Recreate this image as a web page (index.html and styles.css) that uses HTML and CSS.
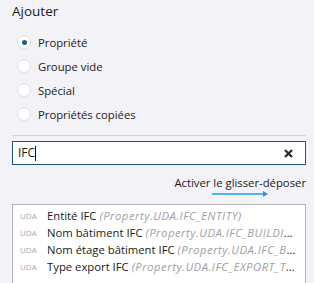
FILE: index.html
```html
<!DOCTYPE html>
<html lang="fr">
<head>
    <meta charset="UTF-8">
    <meta name="viewport" content="width=device-width, initial-scale=1.0">
    <title>Ajouter</title>
    <link rel="stylesheet" href="styles.css">
</head>
<body>
    <div class="panel">
        <h2 class="panel-title">Ajouter</h2>

        <div class="radio-list">
            <label class="radio-row"><span class="radio checked"></span>Propriété</label>
            <label class="radio-row"><span class="radio"></span>Groupe vide</label>
            <label class="radio-row"><span class="radio"></span>Spécial</label>
            <label class="radio-row"><span class="radio"></span>Propriétés copiées</label>
        </div>

        <div class="separator"></div>

        <div class="search-box">
            <span class="search-text">IFC</span><span class="caret"></span>
            <svg class="clear-icon" width="9" height="9" viewBox="0 0 9 9">
                <path d="M1 1 L8 8 M8 1 L1 8" stroke="#2b2b2b" stroke-width="2.3" stroke-linecap="butt"/>
            </svg>
        </div>

        <div class="dnd-row">
            <div class="dnd-toggle">
                <span>Activer le glisser-déposer</span>
                <svg class="dnd-arrow" width="56" height="6" viewBox="0 0 56 6">
                    <path d="M0 3 H52" stroke="#4fb4e3" stroke-width="2"/>
                    <path d="M51 0 L56 3 L51 6 Z" fill="#2f95d0"/>
                </svg>
            </div>
        </div>

        <div class="results">
            <div class="result-row"><span class="tag">UDA</span><span class="name">Entité IFC <em>(Property.UDA.IFC_ENTITY)</em></span></div>
            <div class="result-row"><span class="tag">UDA</span><span class="name">Nom bâtiment IFC <em>(Property.UDA.IFC_BUILDING_NAME)</em></span></div>
            <div class="result-row"><span class="tag">UDA</span><span class="name">Nom étage bâtiment IFC <em>(Property.UDA.IFC_BUILDING_STOREY_NAME)</em></span></div>
            <div class="result-row"><span class="tag">UDA</span><span class="name">Type export IFC <em>(Property.UDA.IFC_EXPORT_TYPE)</em></span></div>
        </div>
    </div>
</body>
</html>
```

FILE: styles.css
```css
body {
    margin: 0;
    height: 283px;
    background-color: #f3f2f7;
    font-family: 'Open Sans', 'Noto Sans', sans-serif;
    font-size: 11.3px;
    color: #1a1a1a;
    overflow: hidden;
}

.panel {
    padding: 0 8px 0 12px;
}

.panel-title {
    margin: 0;
    padding-top: 2px;
    font-size: 13.5px;
    font-weight: normal;
    line-height: 18px;
}

.radio-list {
    padding-top: 10px;
}

.radio-row {
    display: flex;
    align-items: center;
    height: 24px;
    padding-left: 5px;
}

.radio {
    width: 12px;
    height: 12px;
    border: 1px solid #dcdce2;
    border-radius: 50%;
    background: #ffffff;
    margin-right: 7px;
    display: flex;
    align-items: center;
    justify-content: center;
}

.radio.checked::after {
    content: "";
    width: 5px;
    height: 5px;
    border-radius: 50%;
    background: #1c5c96;
}

.separator {
    height: 1px;
    background: #d2d2d8;
    margin-top: 9px;
}

.search-box {
    margin-top: 5px;
    height: 22px;
    border: 1px solid #1f5382;
    background: #ffffff;
    display: flex;
    align-items: center;
    padding-left: 5px;
    padding-right: 12px;
    font-size: 12px;
}

.search-text {
    line-height: 16px;
}

.caret {
    width: 1px;
    height: 15px;
    background: #111111;
}

.clear-icon {
    margin-left: auto;
}

.dnd-row {
    display: flex;
    justify-content: flex-end;
    padding-top: 10px;
}

.dnd-toggle {
    display: flex;
    flex-direction: column;
    align-items: center;
}

.dnd-arrow {
    display: block;
    margin-top: 1px;
}

.results {
    margin-top: 7px;
    border: 1px solid #b4b4b8;
    background: #ffffff;
    padding: 2px 8px 20px 7px;
}

.result-row {
    display: flex;
    align-items: center;
    height: 17px;
    white-space: nowrap;
}

.tag {
    font-size: 8px;
    color: #a8a8a8;
    width: 27px;
    flex-shrink: 0;
}

.name {
    overflow: hidden;
    text-overflow: ellipsis;
}

.name em {
    color: #a0a0a0;
    letter-spacing: 0.5px;
}
```
